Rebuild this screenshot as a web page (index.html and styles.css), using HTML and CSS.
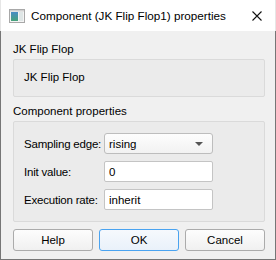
FILE: index.html
```html
<!DOCTYPE html>
<html lang="en">

<head>
    <meta charset="UTF-8">
    <title>Component properties</title>
    <link rel="stylesheet" href="styles.css">
</head>

<body>
    <div class="window">
        <div class="titlebar">
            <svg class="app-icon" width="16" height="14" viewBox="0 0 16 14">
                <rect x="0.5" y="0.5" width="15" height="13" fill="#f4f4f4" stroke="#a8a8a8"/>
                <rect x="2" y="3" width="7" height="9" fill="url(#g)"/>
                <rect x="10" y="3" width="4" height="9" fill="#dfe6e6"/>
                <rect x="1" y="1" width="14" height="1.5" fill="#d0d0d0"/>
                <defs>
                    <linearGradient id="g" x1="0" y1="0" x2="0" y2="1">
                        <stop offset="0" stop-color="#4a8cc6"/>
                        <stop offset="1" stop-color="#47a37a"/>
                    </linearGradient>
                </defs>
            </svg>
            <span class="title">Component (JK Flip Flop1) properties</span>
            <span class="close">
                <svg width="10" height="10" viewBox="0 0 10 10">
                    <path d="M0.5 0.5 L9.5 9.5 M9.5 0.5 L0.5 9.5" stroke="#111" stroke-width="1.1"/>
                </svg>
            </span>
        </div>

        <div class="content">
            <div class="group-title">JK Flip Flop</div>
            <div class="group name-box">JK Flip Flop</div>

            <div class="group-title">Component properties</div>
            <div class="group props">
                <div class="row">
                    <label>Sampling edge:</label>
                    <div class="combo">
                        <span>rising</span>
                        <span class="arrow"></span>
                    </div>
                </div>
                <div class="row">
                    <label>Init value:</label>
                    <div class="field">0</div>
                </div>
                <div class="row">
                    <label>Execution rate:</label>
                    <div class="field">inherit</div>
                </div>
            </div>

            <div class="buttons">
                <button>Help</button>
                <button class="default">OK</button>
                <button>Cancel</button>
            </div>
        </div>
    </div>
</body>

</html>
```

FILE: styles.css
```css
/* Dialog window */
body {
    margin: 0;
    font-family: "Liberation Sans", Arial, sans-serif;
    font-size: 11.5px;
    color: #000;
    background: #fff;
}

.window {
    width: 276px;
    height: 260px;
    display: flex;
    flex-direction: column;
    box-sizing: border-box;
}

.titlebar {
    height: 31px;
    background: #fff;
    display: flex;
    align-items: center;
    padding-left: 8px;
    border-left: 1px solid #e6e6e6;
    border-right: 1px solid #e6e6e6;
    box-sizing: border-box;
}

.app-icon {
    margin-right: 6px;
    margin-top: 1px;
}

.title {
    flex: 1;
    font-size: 11.7px;
    white-space: nowrap;
}

.close {
    width: 10px;
    height: 10px;
    margin-right: 13px;
    margin-top: 1px;
    display: flex;
}

.content {
    flex: 1;
    background: #f0f0f0;
    border: 1px solid #767676;
    border-top: none;
    padding: 10px 10px 0 12px;
    display: flex;
    flex-direction: column;
}

.group-title {
    height: 18px;
    line-height: 16px;
    white-space: nowrap;
}

.group {
    border: 1px solid #dadada;
    border-radius: 2px;
    background: #ebebeb;
    box-sizing: border-box;
}

.name-box {
    height: 38px;
    line-height: 35px;
    padding-left: 10px;
    margin-bottom: 6px;
}

.props {
    height: 101px;
    padding: 11px 10px 0 10px;
    display: flex;
    flex-direction: column;
    gap: 7px;
}

.row {
    display: flex;
    align-items: center;
    height: 21px;
}

.row label {
    width: 80px;
    flex-shrink: 0;
    white-space: nowrap;
    letter-spacing: -0.2px;
}

.combo,
.field {
    width: 109px;
    height: 21px;
    box-sizing: border-box;
    border-radius: 2px;
    padding-left: 4px;
    display: flex;
    align-items: center;
}

.combo {
    border: 1px solid #bdbdbd;
    background: linear-gradient(#fdfdfd, #f2f2f2);
    justify-content: space-between;
    padding-right: 9px;
    border-radius: 3px;
}

.arrow {
    width: 0;
    height: 0;
    border-left: 4px solid transparent;
    border-right: 4px solid transparent;
    border-top: 4px solid #555;
}

.field {
    border: 1px solid #c4c4c4;
    background: #fff;
}

.buttons {
    display: flex;
    gap: 6px;
    margin-top: 7px;
}

button {
    width: 80px;
    height: 22px;
    font: inherit;
    color: #000;
    border: 1px solid #ababab;
    border-radius: 3px;
    background: linear-gradient(#fdfdfd, #f0f0f0);
    padding: 0;
}

button.default {
    border-color: #4aa3f0;
    background: linear-gradient(#f6f9fd, #e9f1fa);
}
```
